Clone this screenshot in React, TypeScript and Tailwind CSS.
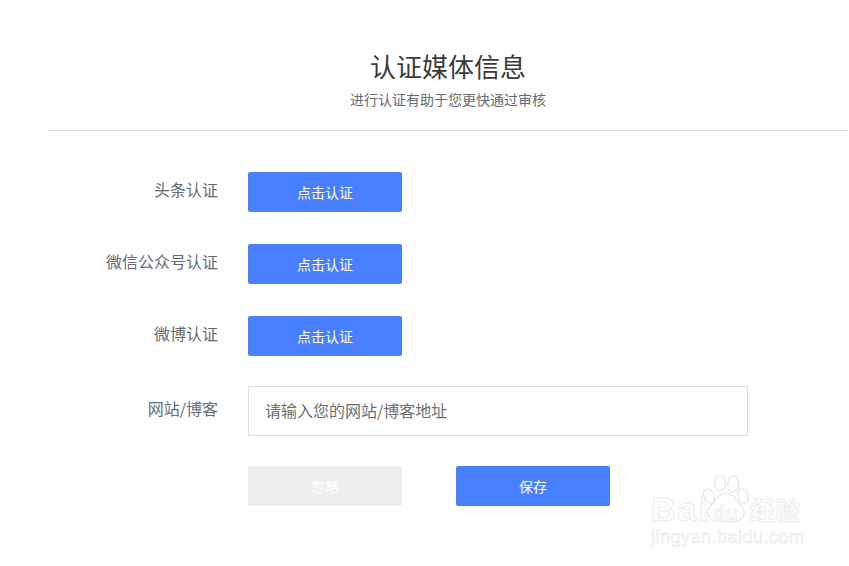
const FONT = "font-['Noto_Sans_CJK_SC','Liberation_Sans',sans-serif]";

function AuthRow({ label }: { label: string }) {
  return (
    <div className="flex items-start">
      <div className="w-[170px] text-right text-[16px] leading-[34px] text-[#666c75]">{label}</div>
      <button type="button" className="ml-[30px] h-10 w-[154px] rounded-[2px] bg-[#477fff] text-[14px] text-white">
        点击认证
      </button>
    </div>
  );
}

function Watermark() {
  return (
    <div className="absolute left-[650px] top-[472px] h-[76px] w-[165px] select-none text-transparent [-webkit-text-stroke:1px_#ececec]">
      <svg className="absolute left-[52px] top-[1px]" width="48" height="52" viewBox="0 0 48 52" fill="#fff" stroke="#e6e6e6" strokeWidth="1.2">
        <ellipse cx="7" cy="23" rx="5" ry="7.5" transform="rotate(-25 7 23)" />
        <ellipse cx="18" cy="10" rx="5.5" ry="8" />
        <ellipse cx="31" cy="11" rx="5.5" ry="8" transform="rotate(12 31 11)" />
        <ellipse cx="41" cy="23" rx="5" ry="7.5" transform="rotate(-20 41 23)" />
        <path d="M24 20c7 0 9 6 13 10 4 4 7 8 4 14-3 5-9 5-17 4-7 1-14 1-17-4-3-6 0-10 4-14 4-4 6-10 13-10z" />
      </svg>
      <span className="absolute left-[1px] top-[19px] font-['Liberation_Sans',sans-serif] text-[34px] font-bold leading-[36px] tracking-[2px]">
        Bai
      </span>
      <span className="absolute left-[63px] top-[29px] font-['Liberation_Sans',sans-serif] text-[20px] font-bold leading-[24px]">
        du
      </span>
      <span className="absolute left-[100px] top-[22px] text-[25px] font-bold leading-[30px]">经验</span>
      <span className="absolute left-[1px] top-[54px] font-['Liberation_Sans',sans-serif] text-[18px] leading-[22px] tracking-[0.5px] [-webkit-text-stroke:0.6px_#e6e6e6]">
        jingyan.baidu.com
      </span>
    </div>
  );
}

export default function App() {
  return (
    <div className={`relative h-[566px] w-[849px] overflow-hidden bg-white ${FONT}`}>
      <div className="ml-12 w-[800px]">
        <div className="h-[131px] border-b border-[#d5e0e8] pt-[48px] text-center">
          <h1 className="text-[26px] leading-[36px] text-[#3a3a3a]">认证媒体信息</h1>
          <p className="mt-[6px] text-[14px] leading-[18px] text-[#666c75]">进行认证有助于您更快通过审核</p>
        </div>

        <div className="flex flex-col gap-8 pt-[41px]">
          <AuthRow label="头条认证" />
          <AuthRow label="微信公众号认证" />
          <AuthRow label="微博认证" />
          <div className="mt-[-2px] flex items-start">
            <div className="w-[170px] text-right text-[16px] leading-[44px] text-[#666c75]">网站/博客</div>
            <div className="ml-[30px] flex h-[50px] w-[500px] items-center border border-[#d5e0e8] pb-[2px] pl-4 text-[16px] text-[#6d6f73]">
              请输入您的网站/博客地址
            </div>
          </div>
          <div className="ml-[200px] mt-[-2px] flex gap-[54px]">
            <button type="button" className="h-10 w-[154px] rounded-[2px] bg-[#efefef] text-[14px] text-white">
              忽略
            </button>
            <button type="button" className="h-10 w-[154px] rounded-[2px] bg-[#477fff] text-[14px] text-white">
              保存
            </button>
          </div>
        </div>
      </div>
      <Watermark />
    </div>
  );
}
